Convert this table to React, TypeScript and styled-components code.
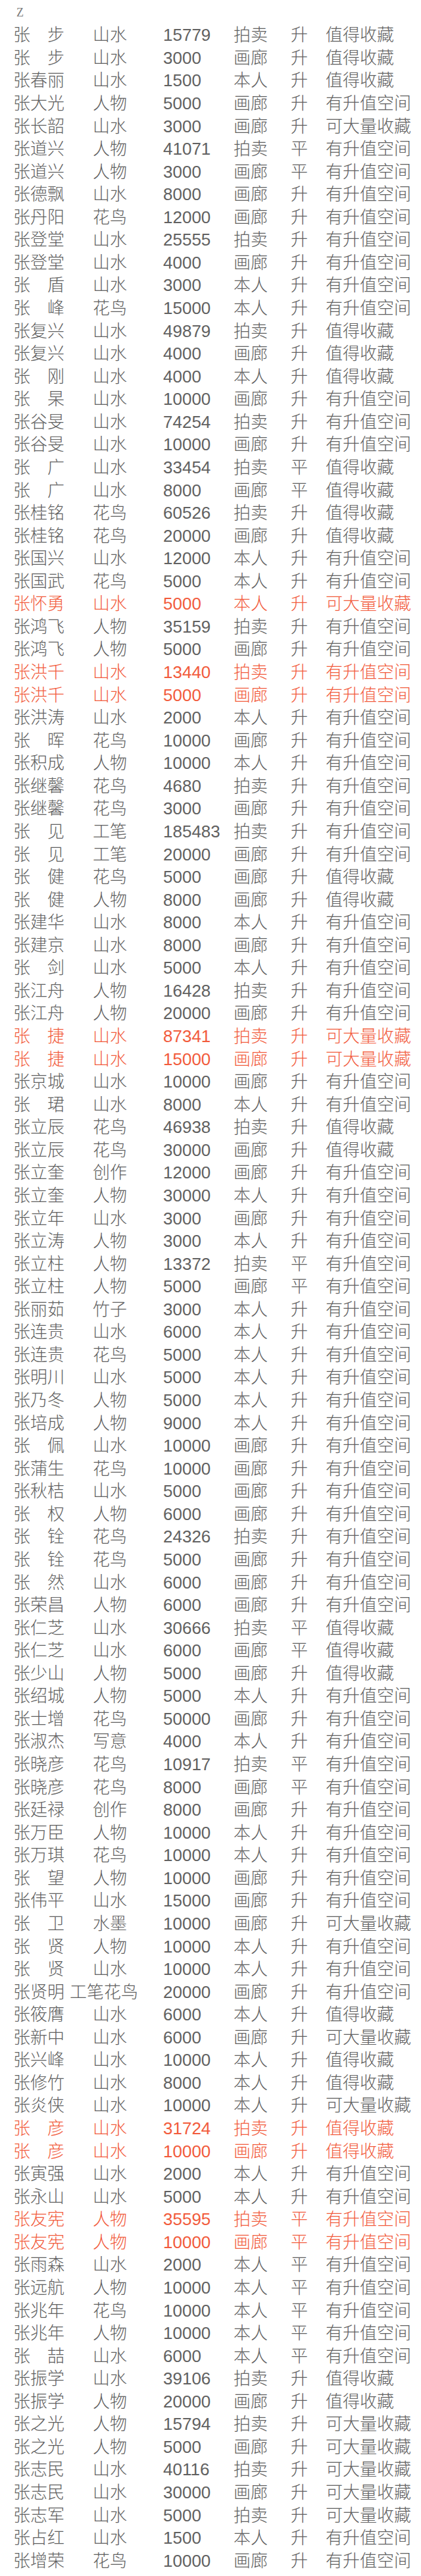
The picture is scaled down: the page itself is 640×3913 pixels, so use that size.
import React from "react";
import styled, { createGlobalStyle } from "styled-components";

const GlobalStyle = createGlobalStyle`
  html, body {
    margin: 0;
    padding: 0;
    background: #ffffff;
  }
  body {
    font-family: "Liberation Sans", "Noto Sans CJK SC", sans-serif;
    -webkit-font-smoothing: antialiased;
  }
`;

const Page = styled.div`
  width: 640px;
  padding: 0 0 4px 20px;
  box-sizing: border-box;
`;

const Letter = styled.div`
  height: 36px;
  line-height: 38px;
  padding-left: 5px;
  font-family: "Liberation Serif", "DejaVu Serif", serif;
  font-size: 18px;
  color: #7a7a7a;
`;

const Table = styled.div`
  display: flex;
  flex-direction: column;
`;

const Row = styled.div<{ $hot?: boolean }>`
  display: grid;
  grid-template-columns: 121px 107px 107px 87px 53px 1fr;
  height: 34.57px;
  align-items: center;
  font-family: "Liberation Sans", "Noto Sans CJK SC", sans-serif;
  font-size: 26px;
  font-weight: 300;
  line-height: 34px;
  color: ${(p) => (p.$hot ? "#f25b3c" : "#616161")};
  white-space: nowrap;
`;

const Cell = styled.span<{ $wide?: boolean }>`
  display: block;
  margin-left: ${(p) => (p.$wide ? "-35px" : "0")};
`;

const raw = `张　步|山水|15779|拍卖|升|值得收藏
张　步|山水|3000|画廊|升|值得收藏
张春丽|山水|1500|本人|升|值得收藏
张大光|人物|5000|画廊|升|有升值空间
张长韶|山水|3000|画廊|升|可大量收藏
张道兴|人物|41071|拍卖|平|有升值空间
张道兴|人物|3000|画廊|平|有升值空间
张德飘|山水|8000|画廊|升|有升值空间
张丹阳|花鸟|12000|画廊|升|有升值空间
张登堂|山水|25555|拍卖|升|有升值空间
张登堂|山水|4000|画廊|升|有升值空间
张　盾|山水|3000|本人|升|有升值空间
张　峰|花鸟|15000|本人|升|有升值空间
张复兴|山水|49879|拍卖|升|值得收藏
张复兴|山水|4000|画廊|升|值得收藏
张　刚|山水|4000|本人|升|值得收藏
张　杲|山水|10000|画廊|升|有升值空间
张谷旻|山水|74254|拍卖|升|有升值空间
张谷旻|山水|10000|画廊|升|有升值空间
张　广|山水|33454|拍卖|平|值得收藏
张　广|山水|8000|画廊|平|值得收藏
张桂铭|花鸟|60526|拍卖|升|值得收藏
张桂铭|花鸟|20000|画廊|升|值得收藏
张国兴|山水|12000|本人|升|有升值空间
张国武|花鸟|5000|本人|升|有升值空间
张怀勇|山水|5000|本人|升|可大量收藏|r
张鸿飞|人物|35159|拍卖|升|有升值空间
张鸿飞|人物|5000|画廊|升|有升值空间
张洪千|山水|13440|拍卖|升|有升值空间|r
张洪千|山水|5000|画廊|升|有升值空间|r
张洪涛|山水|2000|本人|升|有升值空间
张　晖|花鸟|10000|画廊|升|有升值空间
张积成|人物|10000|本人|升|有升值空间
张继馨|花鸟|4680|拍卖|升|有升值空间
张继馨|花鸟|3000|画廊|升|有升值空间
张　见|工笔|185483|拍卖|升|有升值空间
张　见|工笔|20000|画廊|升|有升值空间
张　健|花鸟|5000|画廊|升|值得收藏
张　健|人物|8000|画廊|升|值得收藏
张建华|山水|8000|本人|升|有升值空间
张建京|山水|8000|画廊|升|有升值空间
张　剑|山水|5000|本人|升|有升值空间
张江舟|人物|16428|拍卖|升|有升值空间
张江舟|人物|20000|画廊|升|有升值空间
张　捷|山水|87341|拍卖|升|可大量收藏|r
张　捷|山水|15000|画廊|升|可大量收藏|r
张京城|山水|10000|画廊|升|有升值空间
张　珺|山水|8000|本人|升|有升值空间
张立辰|花鸟|46938|拍卖|升|值得收藏
张立辰|花鸟|30000|画廊|升|值得收藏
张立奎|创作|12000|画廊|升|有升值空间
张立奎|人物|30000|本人|升|有升值空间
张立年|山水|3000|画廊|升|有升值空间
张立涛|人物|3000|本人|升|有升值空间
张立柱|人物|13372|拍卖|平|有升值空间
张立柱|人物|5000|画廊|平|有升值空间
张丽茹|竹子|3000|本人|升|有升值空间
张连贵|山水|6000|本人|升|有升值空间
张连贵|花鸟|5000|本人|升|有升值空间
张明川|山水|5000|本人|升|有升值空间
张乃冬|人物|5000|本人|升|有升值空间
张培成|人物|9000|本人|升|有升值空间
张　佩|山水|10000|画廊|升|有升值空间
张蒲生|花鸟|10000|画廊|升|有升值空间
张秋桔|山水|5000|画廊|升|有升值空间
张　权|人物|6000|画廊|升|有升值空间
张　铨|花鸟|24326|拍卖|升|有升值空间
张　铨|花鸟|5000|画廊|升|有升值空间
张　然|山水|6000|画廊|升|有升值空间
张荣昌|人物|6000|画廊|升|有升值空间
张仁芝|山水|30666|拍卖|平|值得收藏
张仁芝|山水|6000|画廊|平|值得收藏
张少山|人物|5000|画廊|升|值得收藏
张绍城|人物|5000|本人|升|有升值空间
张士增|花鸟|50000|画廊|升|有升值空间
张淑杰|写意|4000|本人|升|有升值空间
张晓彦|花鸟|10917|拍卖|平|有升值空间
张晓彦|花鸟|8000|画廊|平|有升值空间
张廷禄|创作|8000|画廊|升|有升值空间
张万臣|人物|10000|本人|升|有升值空间
张万琪|花鸟|10000|本人|升|有升值空间
张　望|人物|10000|画廊|升|有升值空间
张伟平|山水|15000|画廊|升|有升值空间
张　卫|水墨|10000|画廊|升|可大量收藏
张　贤|人物|10000|本人|升|有升值空间
张　贤|山水|10000|本人|升|有升值空间
张贤明|工笔花鸟|20000|画廊|升|有升值空间
张筱膺|山水|6000|本人|升|值得收藏
张新中|山水|6000|画廊|升|可大量收藏
张兴峰|山水|10000|本人|升|值得收藏
张修竹|山水|8000|本人|升|值得收藏
张炎侠|山水|10000|本人|升|可大量收藏
张　彦|山水|31724|拍卖|升|值得收藏|r
张　彦|山水|10000|画廊|升|值得收藏|r
张寅强|山水|2000|本人|升|有升值空间
张永山|山水|5000|本人|升|有升值空间
张友宪|人物|35595|拍卖|平|有升值空间|r
张友宪|人物|10000|画廊|平|有升值空间|r
张雨森|山水|2000|本人|平|有升值空间
张远航|人物|10000|本人|平|有升值空间
张兆年|花鸟|10000|本人|平|有升值空间
张兆年|人物|10000|本人|平|有升值空间
张　喆|山水|6000|本人|平|有升值空间
张振学|山水|39106|拍卖|升|值得收藏
张振学|人物|20000|画廊|升|值得收藏
张之光|人物|15794|拍卖|升|可大量收藏
张之光|人物|5000|画廊|升|可大量收藏
张志民|山水|40116|拍卖|升|可大量收藏
张志民|山水|30000|画廊|升|可大量收藏
张志军|山水|5000|拍卖|升|可大量收藏
张占红|山水|1500|本人|升|有升值空间
张增荣|花鸟|10000|画廊|升|有升值空间`;

type Entry = {
  name: string;
  kind: string;
  price: string;
  source: string;
  trend: string;
  note: string;
  hot: boolean;
};

const rows: Entry[] = raw.split("\n").map((line) => {
  const [name, kind, price, source, trend, note, flag] = line.split("|");
  return { name, kind, price, source, trend, note, hot: flag === "r" };
});

export default function App() {
  return (
    <>
      <GlobalStyle />
      <Page>
        <Letter>Z</Letter>
        <Table>
          {rows.map((r, i) => (
            <Row key={i} $hot={r.hot}>
              <Cell>{r.name}</Cell>
              <Cell $wide={r.kind.length > 2}>{r.kind}</Cell>
              <Cell>{r.price}</Cell>
              <Cell>{r.source}</Cell>
              <Cell>{r.trend}</Cell>
              <Cell>{r.note}</Cell>
            </Row>
          ))}
        </Table>
      </Page>
    </>
  );
}
